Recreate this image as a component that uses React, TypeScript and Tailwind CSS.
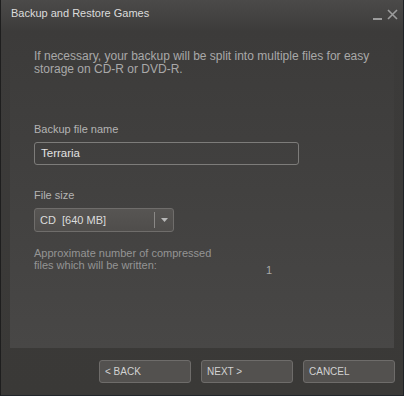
export default function App() {
  return (
    <div className="w-[404px] h-[396px] flex flex-col bg-[linear-gradient(to_bottom,#4b4a49_0px,#3c3b3a_32px,#3a3937_100%)] border-l border-l-[#1e1e1e] border-r border-r-[#1f2226] border-b border-b-[#22262b] font-['Liberation_Sans',Arial,sans-serif] text-[12px]">
      <div className="h-[32px] flex items-start justify-between pl-[10px] pr-[5px] pt-[7px]">
        <span className="text-[#dcdcdc] text-[11px] leading-[13px]">Backup and Restore Games</span>
        <div className="flex items-start gap-[5px] text-[#9c9c9c]">
          <span className="w-[9px] h-[2px] bg-[#9c9c9c] mt-[11px]" />
          <svg width="11" height="11" viewBox="0 0 11 11" className="mt-[2px]">
            <path d="M1 1L10 10M10 1L1 10" stroke="#9c9c9c" strokeWidth="1.6" />
          </svg>
        </div>
      </div>

      <div className="mx-[9px] h-[316px] bg-[linear-gradient(to_bottom,#3c3b3a,#484746)] pl-[24px] pt-[18px]">
        <p className="text-[#a9a9a9] leading-[13px]">
          If necessary, your backup will be split into multiple files for easy
          <br />
          storage on CD-R or DVD-R.
        </p>

        <p className="text-[#b4b4b4] text-[11px] leading-[13px] mt-[47px]">Backup file name</p>
        <div className="mt-[6px] w-[265px] h-[23px] rounded-[3px] border border-[#7d7c7a] flex items-center pl-[6px] text-[11.5px] text-[#e2e2e2]">
          Terraria
        </div>

        <p className="text-[#b4b4b4] text-[11px] leading-[13px] mt-[24px]">File size</p>
        <div className="mt-[6px] w-[140px] h-[24px] rounded-[3px] border border-[#6f6d6b] bg-[linear-gradient(to_bottom,#575553,#4f4d4b)] flex items-center text-[11px] text-[#dcdcdc]">
          <span className="flex-1 pl-[5px]">CD&nbsp;&nbsp;[640 MB]</span>
          <span className="w-px h-[16px] bg-[#8a8886]" />
          <span className="w-[18px] flex justify-center">
            <svg width="7" height="4" viewBox="0 0 7 4">
              <path d="M0 0H7L3.5 4Z" fill="#b8b8b8" />
            </svg>
          </span>
        </div>

        <div className="mt-[15px] flex items-start text-[11px]">
          <p className="w-[232px] text-[#949494] leading-[12px]">
            Approximate number of compressed
            <br />
            files which will be written:
          </p>
          <span className="mt-[17px] text-[#a9a9a9] leading-[12px]">1</span>
        </div>
      </div>

      <div className="flex justify-end gap-[10px] pr-[8px] pt-[12px]">
        {["< BACK", "NEXT >", "CANCEL"].map((label) => (
          <div
            key={label}
            className="w-[92px] h-[23px] rounded-[3px] border border-[#6e6c6a] bg-[#53514f] flex items-center pl-[5px] text-[10px] text-[#d2d2d2]"
          >
            {label}
          </div>
        ))}
      </div>
    </div>
  );
}
